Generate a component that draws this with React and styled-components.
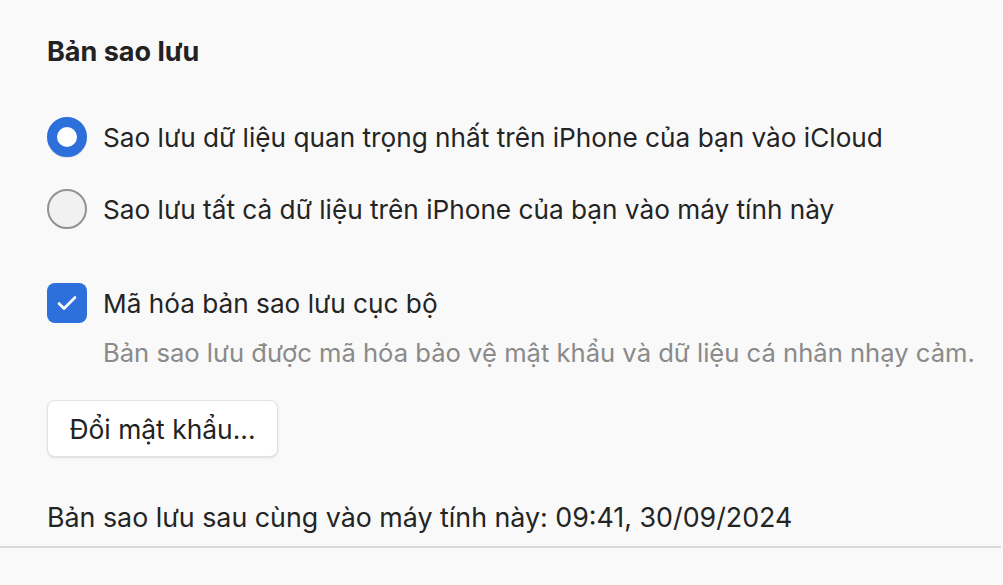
import React, { useState } from 'react'
import styled, { createGlobalStyle } from 'styled-components'

const GlobalStyle = createGlobalStyle`
    html, body {
        margin: 0;
        padding: 0;
        background: #f9f9f9;
    }
    body {
        font-family: Inter, "Noto Sans", "Liberation Sans", sans-serif;
        color: #242424;
        -webkit-font-smoothing: antialiased;
    }
`

const Page = styled.div`
    width: 1003px;
    height: 585px;
    box-sizing: border-box;
    padding-top: 37px;
    overflow: hidden;
`

const Section = styled.div`
    display: flex;
    flex-direction: column;
    padding-left: 47px;
`

const Title = styled.div`
    font-size: 27px;
    line-height: 30px;
    font-weight: 700;
    color: #222;
`

const RadioGroup = styled.div`
    display: flex;
    flex-direction: column;
    gap: 32px;
    margin-top: 50px;
`

const OptionRow = styled.label`
    display: flex;
    align-items: center;
    gap: 16px;
    height: 40px;
    font-size: 26.2px;
    cursor: pointer;
`

const RadioDot = styled.span`
    width: 40px;
    height: 40px;
    flex: none;
    box-sizing: border-box;
    border-radius: 50%;
    background: ${p => (p.$on ? '#fff' : '#f1f1f1')};
    border: ${p => (p.$on ? '10px solid #2d6fdb' : '2px solid #929292')};
    box-shadow: ${p => (p.$on ? '0 1px 1px rgba(0,0,0,0.1)' : 'none')};
`

const CheckBox = styled.span`
    width: 40px;
    height: 40px;
    flex: none;
    border-radius: 8px;
    background: #2d6fdb;
    display: flex;
    align-items: center;
    justify-content: center;
`

const CheckRow = styled(OptionRow)`
    margin-top: 54px;
`

const Hint = styled.div`
    margin-top: 15px;
    padding-left: 56px;
    font-size: 25.6px;
    line-height: 30px;
    color: #8a8a8a;
`

const Button = styled.button`
    align-self: flex-start;
    margin-top: 32px;
    width: 231px;
    height: 57px;
    border: 1px solid #e2e2e2;
    border-radius: 8px;
    background: #fff;
    box-shadow: 0 1px 2px rgba(0, 0, 0, 0.12);
    font-family: inherit;
    font-size: 26.4px;
    color: #222;
    cursor: pointer;
`

const LastBackup = styled.div`
    margin-top: 45px;
    font-size: 26.8px;
    line-height: 30px;
    color: #242424;
`

const Divider = styled.div`
    margin-top: 14px;
    margin-right: 2px;
    height: 2px;
    background: #d9d9d9;
`

const App = () => {
    const [mode, setMode] = useState('icloud')

    return (
        <>
            <GlobalStyle />
            <Page>
                <Section>
                    <Title>Bản sao lưu</Title>
                    <RadioGroup>
                        <OptionRow onClick={() => setMode('icloud')}>
                            <RadioDot $on={mode === 'icloud'} />
                            Sao lưu dữ liệu quan trọng nhất trên iPhone của bạn vào iCloud
                        </OptionRow>
                        <OptionRow onClick={() => setMode('local')}>
                            <RadioDot $on={mode === 'local'} />
                            Sao lưu tất cả dữ liệu trên iPhone của bạn vào máy tính này
                        </OptionRow>
                    </RadioGroup>
                    <CheckRow>
                        <CheckBox>
                            <svg width="26" height="26" viewBox="0 0 26 26" fill="none">
                                <path d="M5 13.5l5 5L21 7.5" stroke="#fff" strokeWidth="2.6" strokeLinecap="round" strokeLinejoin="round" />
                            </svg>
                        </CheckBox>
                        Mã hóa bản sao lưu cục bộ
                    </CheckRow>
                    <Hint>Bản sao lưu được mã hóa bảo vệ mật khẩu và dữ liệu cá nhân nhạy cảm.</Hint>
                    <Button>Đổi mật khẩu...</Button>
                    <LastBackup>Bản sao lưu sau cùng vào máy tính này: 09:41, 30/09/2024</LastBackup>
                </Section>
                <Divider />
            </Page>
        </>
    )
}

export default App
